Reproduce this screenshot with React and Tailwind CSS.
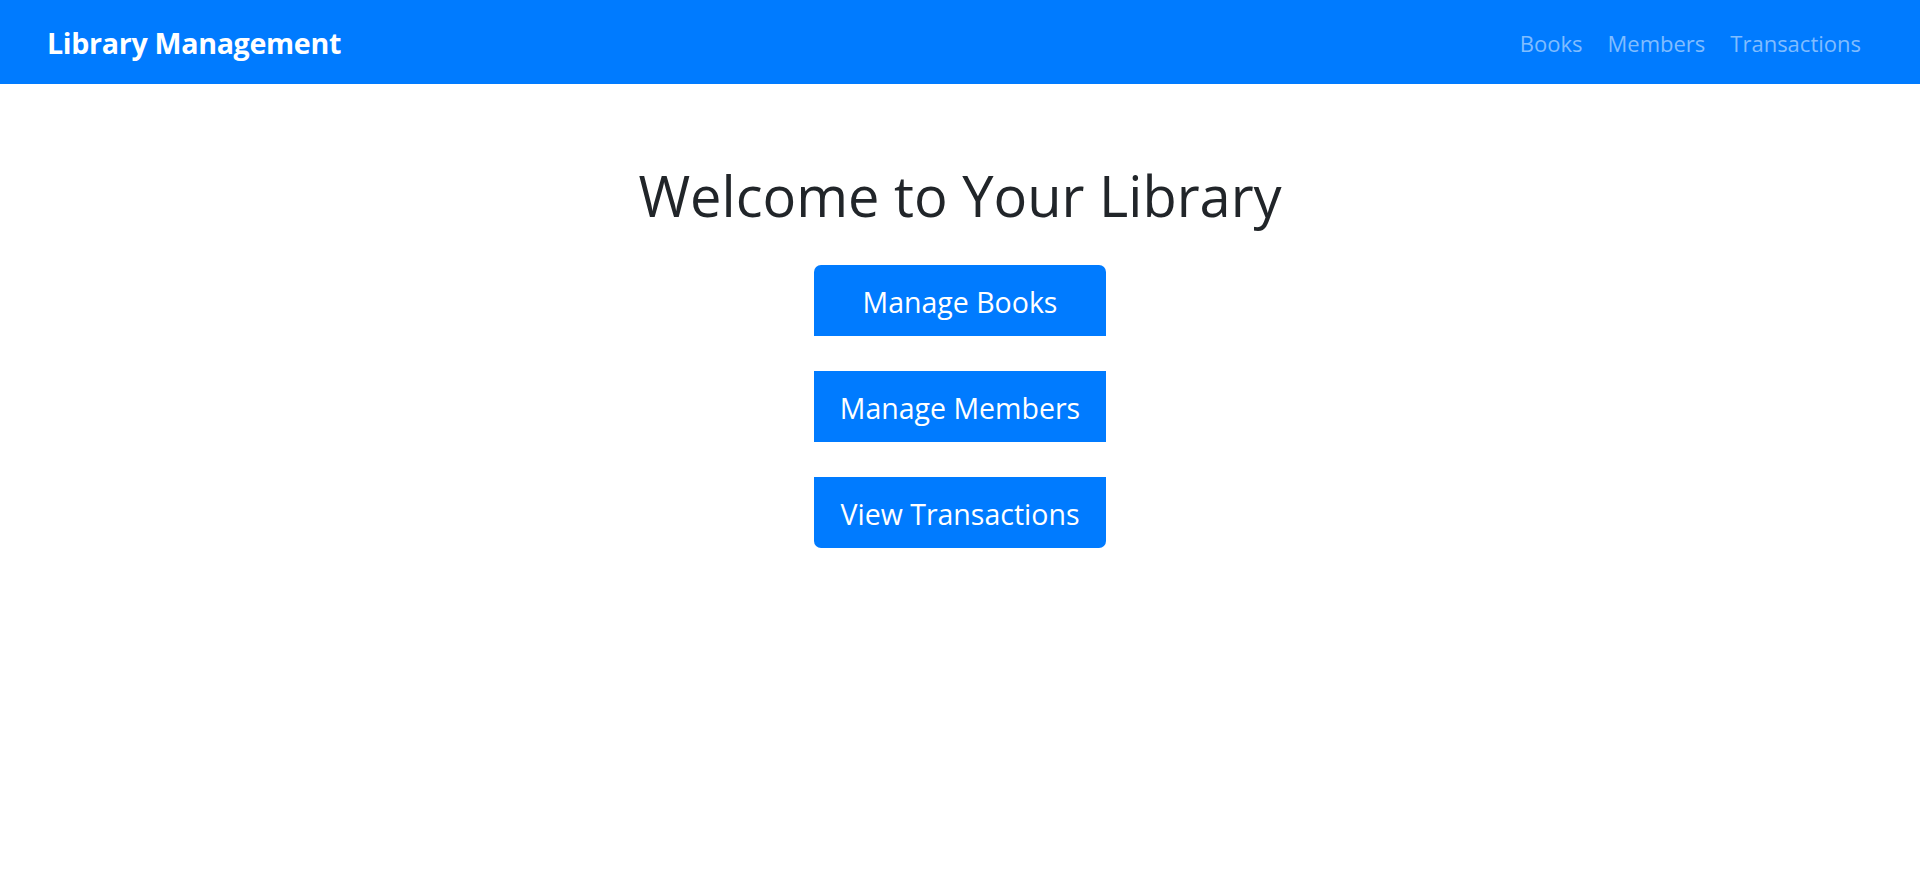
export default function App() {
  const font = { fontFamily: '"Open Sans", "Noto Sans", sans-serif' };
  return (
    <div className="min-h-[880px] bg-white text-[#212529]" style={font}>
      <nav className="h-[84px] bg-[#007bff] flex items-center justify-between pl-[47px] pr-[59px]">
        <span className="text-[28.6px] font-bold text-white tracking-[-0.3px] pt-[2px]">Library Management</span>
        <div className="flex items-center gap-[25px] text-[22px] text-[#80bdff] pt-[2px]">
          <a>Books</a>
          <a>Members</a>
          <a>Transactions</a>
        </div>
      </nav>

      <main className="flex flex-col items-center pt-[78px]">
        <h1 className="text-[56px] font-normal leading-[67px] mb-[36px]">Welcome to Your Library</h1>
        <div className="flex flex-col w-[292px] gap-[35px]">
          <button className="h-[71px] pt-[3px] bg-[#007bff] text-white text-[28.5px] rounded-t-[7px]">Manage Books</button>
          <button className="h-[71px] pt-[3px] bg-[#007bff] text-white text-[28.5px]">Manage Members</button>
          <button className="h-[71px] pt-[3px] bg-[#007bff] text-white text-[28.5px] rounded-b-[7px]">View Transactions</button>
        </div>
      </main>
    </div>
  );
}
